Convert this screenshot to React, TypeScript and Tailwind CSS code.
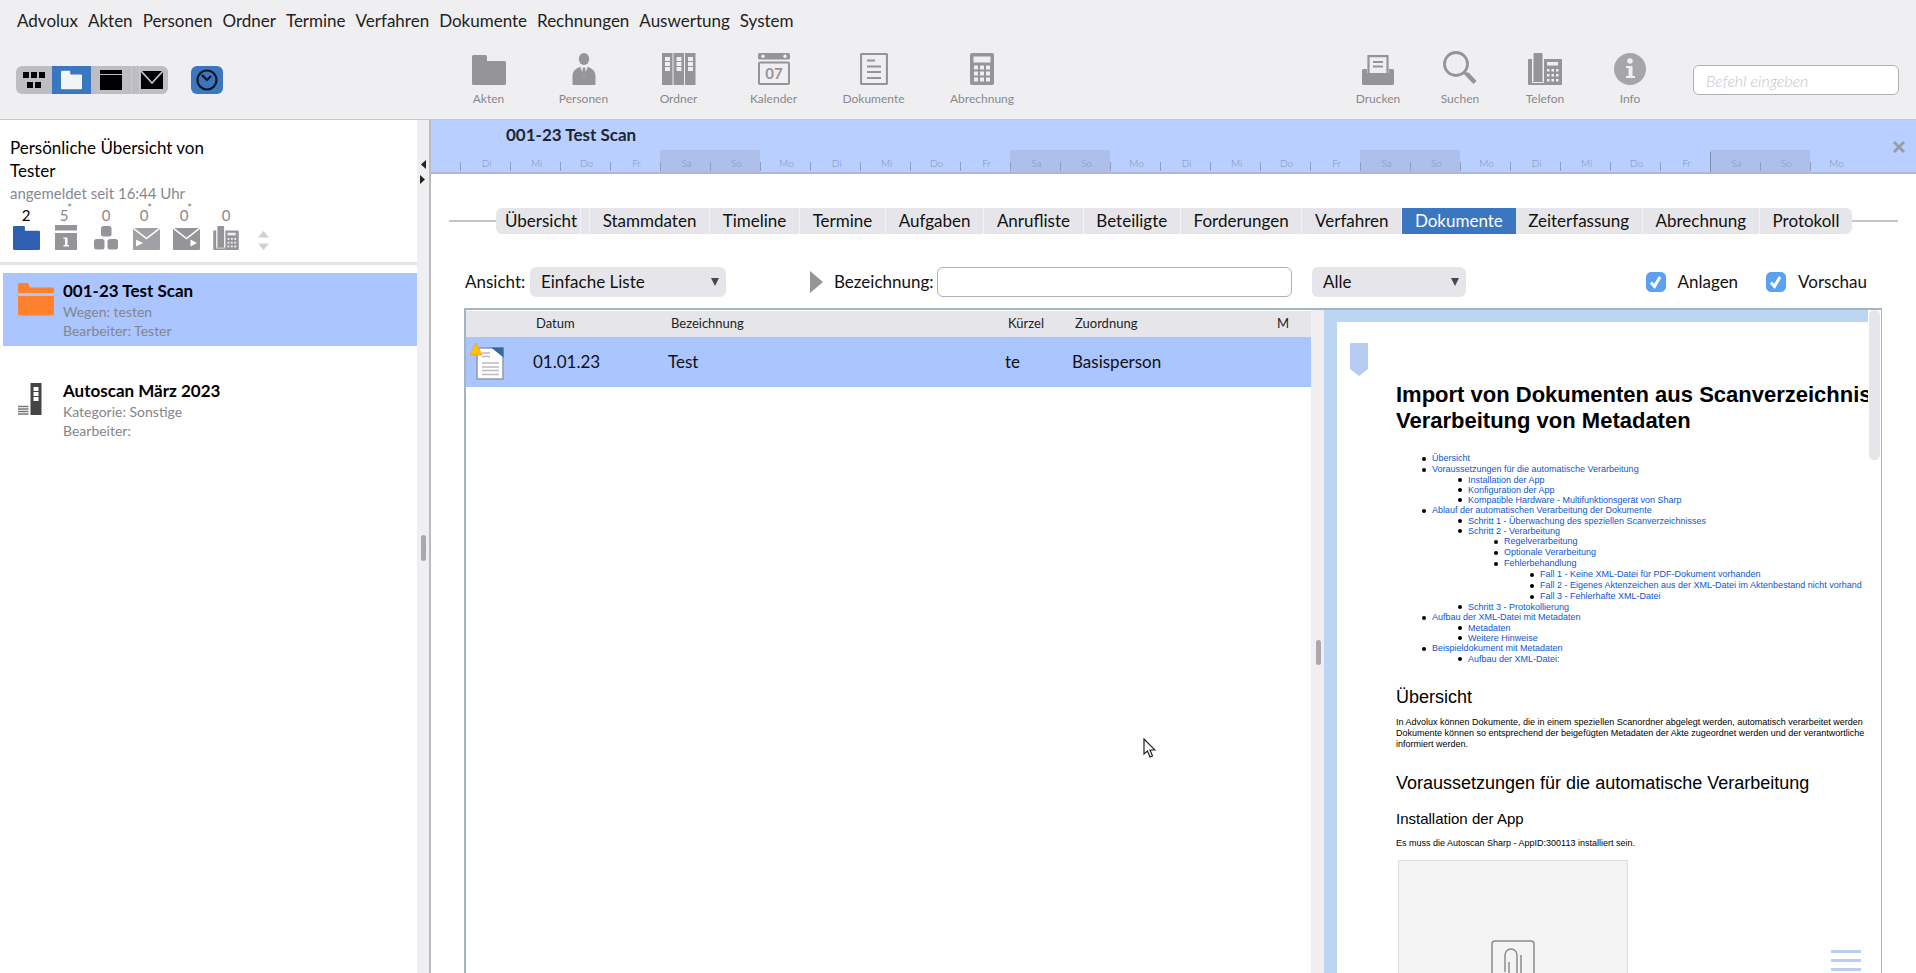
import React, { useState } from 'react';
import clsx from 'clsx';

type IconProps = { className?: string };

const MENU = [
  'Advolux',
  'Akten',
  'Personen',
  'Ordner',
  'Termine',
  'Verfahren',
  'Dokumente',
  'Rechnungen',
  'Auswertung',
  'System',
];

const TABS = [
  'Übersicht',
  'Stammdaten',
  'Timeline',
  'Termine',
  'Aufgaben',
  'Anrufliste',
  'Beteiligte',
  'Forderungen',
  'Verfahren',
  'Dokumente',
  'Zeiterfassung',
  'Abrechnung',
  'Protokoll',
];

const WEEK = ['Di', 'Mi', 'Do', 'Fr', 'Sa', 'So', 'Mo'];
const DAYS = [...WEEK, ...WEEK, ...WEEK, ...WEEK];
const TODAY = 25;

/* ---------- Toolbar icons ---------- */

function FolderIcon({ className }: IconProps) {
  return (
    <svg viewBox="0 0 34 30" className={className} fill="currentColor" aria-hidden="true">
      <path d="M1.500 0h12a1.500 1.500 0 0 1 1.500 1.500V6h17.500a1.500 1.500 0 0 1 1.500 1.500v21a1.500 1.500 0 0 1-1.500 1.500h-31A1.500 1.500 0 0 1 0 28.500v-27A1.500 1.500 0 0 1 1.500 0z" />
    </svg>
  );
}

function PersonIcon({ className }: IconProps) {
  return (
    <svg viewBox="0 0 24 32" className={className} fill="currentColor" aria-hidden="true">
      <ellipse cx="12" cy="6" rx="5.200" ry="6" />
      <path d="M8.500 14 12 25l3.500-11c5 1 8 4.500 8 9.500V31a1 1 0 0 1-1 1h-21a1 1 0 0 1-1-1v-7.500c0-5 3-8.500 8-9.500z" />
      <path d="M11 14.500h2l1 6-2 4-2-4z" />
    </svg>
  );
}

function BindersIcon({ className }: IconProps) {
  return (
    <svg viewBox="0 0 34 32" className={className} aria-hidden="true">
      {[0, 11.5, 23].map((x) => (
        <g key={x}>
          <rect x={x} y="0" width="10.500" height="32" fill="currentColor" />
          <path d={`M${x + 3} 4h5v4h-5zM${x + 3} 9h5v4h-5zM${x + 3} 14h5v4h-5z`} fill="#efeff1" />
        </g>
      ))}
    </svg>
  );
}

function CalendarIcon({ className }: IconProps) {
  return (
    <svg viewBox="0 0 32 32" className={className} aria-hidden="true">
      <rect width="32" height="6.500" rx="1.500" fill="currentColor" />
      <circle cx="5" cy="3.300" r="1.700" fill="#efeff1" />
      <circle cx="27" cy="3.300" r="1.700" fill="#efeff1" />
      <rect x="1" y="9.500" width="30" height="21.500" rx="1" fill="none" stroke="currentColor" strokeWidth="2" />
      <text x="16" y="26" textAnchor="middle" fontSize="15" fontWeight="700" fill="currentColor">
        07
      </text>
    </svg>
  );
}

function DocumentIcon({ className }: IconProps) {
  return (
    <svg viewBox="0 0 28 32" className={className} fill="none" stroke="currentColor" aria-hidden="true">
      <rect x="1" y="1" width="26" height="30" rx="1" strokeWidth="2.200" />
      <path d="M7 7.500h8M7 13.500h14M7 19h14M7 25h14" strokeWidth="2" />
    </svg>
  );
}

function CalculatorIcon({ className }: IconProps) {
  return (
    <svg viewBox="0 0 24 32" className={className} aria-hidden="true">
      <rect width="24" height="32" rx="2" fill="currentColor" />
      <rect x="3.500" y="3.500" width="17" height="6" fill="#efeff1" />
      {[12.5, 18.5, 24.5].map((y) =>
        [4, 10, 16].map((x) => <rect key={`${x}-${y}`} x={x} y={y} width="4" height="4" fill="#efeff1" />),
      )}
    </svg>
  );
}

function PrinterIcon({ className }: IconProps) {
  return (
    <svg viewBox="0 0 32 30" className={className} aria-hidden="true">
      <path d="M1.500 14H5v4h22v-4h3.500a1.500 1.500 0 0 1 1.500 1.500v13a1.500 1.500 0 0 1-1.500 1.500h-29A1.500 1.500 0 0 1 0 28.500v-13A1.500 1.500 0 0 1 1.500 14z" fill="currentColor" />
      <path d="M6.500 18V1.200h19V18" fill="#efeff1" stroke="currentColor" strokeWidth="2.200" />
      <path d="M11 7h10M11 11.500h10" stroke="currentColor" strokeWidth="2" />
    </svg>
  );
}

function SearchIcon({ className }: IconProps) {
  return (
    <svg viewBox="0 0 34 34" className={className} fill="none" stroke="currentColor" aria-hidden="true">
      <circle cx="13" cy="13" r="11.500" strokeWidth="2.800" />
      <path d="m21 21 2.500 2.500" strokeWidth="3" />
      <path d="m23.500 22.500 8.500 9" strokeWidth="4.500" />
    </svg>
  );
}

function PhoneIcon({ className }: IconProps) {
  return (
    <svg viewBox="0 0 34 32" className={className} aria-hidden="true">
      <path d="M1 6h3v22h12V6h17a1 1 0 0 1 1 1v24a1 1 0 0 1-1 1H1a1 1 0 0 1-1-1V7a1 1 0 0 1 1-1z" fill="currentColor" />
      <rect x="5.500" width="9" height="28.500" rx="1" fill="currentColor" />
      <path d="M4.500 6v23.500h11V6" fill="none" stroke="#efeff1" />
      <rect x="19" y="9" width="11" height="3.500" fill="#efeff1" />
      {[16, 21, 26].map((y) =>
        [19, 23.5, 28].map((x) => <rect key={`${x}-${y}`} x={x} y={y} width="2.500" height="2.500" fill="#efeff1" />),
      )}
    </svg>
  );
}

function InfoIcon({ className }: IconProps) {
  return (
    <svg viewBox="0 0 32 32" className={className} aria-hidden="true">
      <circle cx="16" cy="16" r="16" fill="#a5a5aa" />
      <circle cx="16" cy="8" r="2.800" fill="#efeff1" />
      <path d="M12 13h6.500v10H21v2h-9v-2h2.500v-8H12z" fill="#efeff1" />
    </svg>
  );
}

/* ---------- View switch icons ---------- */

function BlocksIcon() {
  return (
    <svg viewBox="0 0 22 18" className="h-[18px] w-[22px]" aria-hidden="true">
      <path d="M0 1h6v6H0zM8 1h6v6H8zM16 1h6v6h-6zM4 11h6v6H4zM12 11h6v6h-6z" />
    </svg>
  );
}

function WindowIcon() {
  return (
    <svg viewBox="0 0 22 20" className="h-5 w-[22px]" aria-hidden="true">
      <path d="M0 0h22v4H0zM0 5h22v15H0z" />
    </svg>
  );
}

function MailIcon() {
  return (
    <svg viewBox="0 0 22 18" className="h-[18px] w-[22px]" aria-hidden="true">
      <path d="M0 0h22v18H0z" />
      <path d="m0 0 11 12L22 0" fill="none" stroke="#bdbdc3" strokeWidth="1.800" />
    </svg>
  );
}

function ClockIcon() {
  return (
    <svg viewBox="0 0 22 22" className="h-[22px] w-[22px]" fill="none" stroke="#0b1520" strokeWidth="2.200" aria-hidden="true">
      <circle cx="11" cy="11" r="9.500" />
      <path d="m6 6 5 5 4-4" />
    </svg>
  );
}

/* ---------- Sidebar icons ---------- */

function AppointmentIcon() {
  return (
    <svg viewBox="0 0 22 25" className="h-[25px] w-[22px]" aria-hidden="true">
      <path d="M0 0h22v5.500H0zM0 8h22v17H0z" fill="#949499" />
      <path d="M8.500 12.500h4V20H14v1.500H8.500V20H10v-6H8.500z" fill="#fff" />
    </svg>
  );
}

function CubesIcon() {
  return (
    <svg viewBox="0 0 24 24" className="h-6 w-6" fill="#949499" aria-hidden="true">
      <rect x="7" y="0" width="10.500" height="10.500" rx="2.500" />
      <rect x="0" y="13" width="10.500" height="10.500" rx="2.500" />
      <rect x="13.500" y="13" width="10.500" height="10.500" rx="2.500" />
    </svg>
  );
}

function EnvelopeIcon({ outgoing = false }: { outgoing?: boolean }) {
  return (
    <svg viewBox="0 0 27 22" className="h-[22px] w-[27px]" aria-hidden="true">
      <rect width="27" height="22" rx="1" fill={outgoing ? '#949499' : '#a0a0a5'} />
      <path d="m0 0 13.500 10.500L27 0" fill="none" stroke="#fff" strokeWidth="1.500" />
      <path d={outgoing ? 'M17.500 11.500v7l6.500-3.500z' : 'M3 11.500v7l7-3.500z'} fill="#fff" />
    </svg>
  );
}

function CaseFolderIcon() {
  return (
    <svg viewBox="0 0 36 33" className="h-[33px] w-9" fill="#ff812d" aria-hidden="true">
      <path d="M1.500 0H10l2 4.500h22.500A1.500 1.500 0 0 1 36 6v4H0V1.500A1.500 1.500 0 0 1 1.500 0z" />
      <path d="M0 13h36v18a1.500 1.500 0 0 1-1.500 1.500h-33A1.500 1.500 0 0 1 0 31z" />
    </svg>
  );
}

function ScanBinderIcon() {
  return (
    <svg viewBox="0 0 24 32" className="h-8 w-6" aria-hidden="true">
      <rect x="12.500" width="11" height="32" rx="0.500" fill="#454545" />
      <path d="M15.500 4h5v4h-5zM15.500 9h5v4h-5zM15.500 14h5v4h-5z" fill="#fff" />
      <path d="M0 23.500h10.500M0 26h10.500M0 28.500h10.500M0 31h10.500" stroke="#777" strokeWidth="1.600" />
    </svg>
  );
}

/* ---------- Header ---------- */

const TOOLS_LEFT = [
  { label: 'Akten', width: 'w-[95px]', icon: <FolderIcon className="h-[30px] w-[34px]" /> },
  { label: 'Personen', width: 'w-[95px]', icon: <PersonIcon className="h-8 w-6" /> },
  { label: 'Ordner', width: 'w-[95px]', icon: <BindersIcon className="h-8 w-[34px]" /> },
  { label: 'Kalender', width: 'w-[95px]', icon: <CalendarIcon className="h-8 w-8" /> },
  { label: 'Dokumente', width: 'w-[105px]', icon: <DocumentIcon className="h-8 w-7" /> },
  { label: 'Abrechnung', width: 'w-[112px]', icon: <CalculatorIcon className="h-8 w-6" /> },
];

const TOOLS_RIGHT = [
  { label: 'Drucken', width: 'w-20', icon: <PrinterIcon className="h-[30px] w-8" /> },
  { label: 'Suchen', width: 'w-[84px]', icon: <SearchIcon className="h-[34px] w-[34px]" /> },
  { label: 'Telefon', width: 'w-[86px]', icon: <PhoneIcon className="h-8 w-[34px]" /> },
  { label: 'Info', width: 'w-[84px]', icon: <InfoIcon className="h-8 w-8" /> },
];

function ToolButton({ label, width, icon }: { label: string; width: string; icon: React.ReactNode }) {
  return (
    <button type="button" className={clsx('flex flex-col items-center gap-1 text-[#949499]', width)}>
      <span className="flex h-[34px] items-end">{icon}</span>
      <span className="text-[12px] leading-5 text-[#88888d]">{label}</span>
    </button>
  );
}

function Header() {
  return (
    <header className="h-[120px] shrink-0 border-b border-[#c6c6c9] bg-[#efeff1]">
      <nav className="flex h-[42px] items-center gap-[10px] px-[17px] text-[17px] text-[#222]">
        {MENU.map((item) => (
          <button key={item} type="button">
            {item}
          </button>
        ))}
      </nav>
      <div className="flex h-[76px] items-center">
        <div className="flex w-[441px] shrink-0 items-center pl-4">
          <div className="flex h-7 overflow-hidden rounded-md bg-[#bdbdc3]">
            <button type="button" aria-label="Übersicht" className="flex w-9 items-center justify-center">
              <BlocksIcon />
            </button>
            <button type="button" aria-label="Akten" className="flex w-[39px] items-center justify-center bg-[#3b76c0] text-[#f4f4f4]">
              <FolderIcon className="h-5 w-[21px]" />
            </button>
            <button type="button" aria-label="Fenster" className="flex w-10 items-center justify-center">
              <WindowIcon />
            </button>
            <span className="w-[9px] border-x border-[#c9c9ce]" />
            <button type="button" aria-label="Post" className="flex w-7 items-center pl-px">
              <MailIcon />
            </button>
          </div>
          <button type="button" aria-label="Uhr" className="ml-[23px] flex h-7 w-8 items-center justify-center rounded-md bg-[#3b76c0]">
            <ClockIcon />
          </button>
        </div>
        <div className="flex">
          {TOOLS_LEFT.map((tool) => (
            <ToolButton key={tool.label} {...tool} />
          ))}
        </div>
        <div className="ml-auto flex">
          {TOOLS_RIGHT.map((tool) => (
            <ToolButton key={tool.label} {...tool} />
          ))}
        </div>
        <input
          type="text"
          aria-label="Befehl"
          placeholder="Befehl eingeben"
          className="mr-[17px] ml-[21px] h-[30px] w-[206px] rounded-md border border-[#b0b0b3] bg-white px-3 text-[16px] font-light italic placeholder:text-[#c4c4c8]"
        />
      </div>
    </header>
  );
}

/* ---------- Sidebar ---------- */

const COUNTERS = [
  { label: 'Akten', count: '2', icon: <FolderIcon className="h-6 w-[27px] text-[#2f5fb0]" />, active: true },
  { label: 'Termine', count: '5', star: true, icon: <AppointmentIcon /> },
  { label: 'Aufgaben', count: '0', icon: <CubesIcon /> },
  { label: 'Posteingang', count: '0', star: true, icon: <EnvelopeIcon /> },
  { label: 'Postausgang', count: '0', star: true, icon: <EnvelopeIcon outgoing /> },
  { label: 'Anrufe', count: '0', icon: <PhoneIcon className="h-6 w-[26px] text-[#949499]" /> },
];

function CaseEntry({ title, lines, icon, selected = false }: { title: string; lines: string[]; icon: React.ReactNode; selected?: boolean }) {
  return (
    <button
      type="button"
      className={clsx('ml-[3px] flex h-[73px] w-full items-start pl-[15px] text-left', selected && 'bg-[#aac5ff]')}
    >
      <span className="flex w-[45px] pt-[10px]">{icon}</span>
      <span className="flex flex-col pt-[7px]">
        <span className="text-[17px] leading-[22px] font-bold text-black">{title}</span>
        {lines.map((line) => (
          <span key={line} className="text-[14px] leading-[19px] text-[#85858a]">
            {line}
          </span>
        ))}
      </span>
    </button>
  );
}

function Sidebar() {
  return (
    <aside className="w-[417px] shrink-0 overflow-hidden bg-white">
      <div className="h-[145px] border-b-[3px] border-[#e4e4e6] px-[10px] pt-4">
        <p className="text-[17px] leading-[23px] text-black">
          Persönliche Übersicht von
          <br />
          Tester
        </p>
        <p className="text-[15px] leading-[23px] text-[#88888c]">angemeldet seit 16:44 Uhr</p>
        <div className="flex items-end pl-[2px]">
          {COUNTERS.map(({ label, count, star, icon, active }) => (
            <button key={label} type="button" aria-label={label} className="flex w-10 flex-col items-start">
              <span
                className={clsx(
                  'relative text-center text-[15px] leading-[21px]',
                  active ? 'text-black' : 'text-[#88888c]',
                  star ? 'w-6' : 'w-7',
                )}
              >
                {count}
                {star && <span className="absolute -top-2 left-[15px] text-[12px]">*</span>}
              </span>
              <span className="flex h-6 w-7 items-end justify-center">{icon}</span>
            </button>
          ))}
          <svg viewBox="0 0 11 19" className="ml-[6px] h-[19px] w-[11px]" fill="#cfcfd4" aria-hidden="true">
            <path d="m5.500 0 5.500 6.500H0zM5.500 19 0 12.500h11z" />
          </svg>
        </div>
      </div>
      <div className="flex flex-col gap-[27px] pt-2">
        <CaseEntry selected title="001-23 Test Scan" lines={['Wegen: testen', 'Bearbeiter: Tester']} icon={<CaseFolderIcon />} />
        <CaseEntry title="Autoscan März 2023" lines={['Kategorie: Sonstige', 'Bearbeiter:']} icon={<ScanBinderIcon />} />
      </div>
    </aside>
  );
}

/* ---------- Main area ---------- */

function CaseBanner() {
  return (
    <div className="relative flex h-[54px] shrink-0 flex-col justify-between border-b-2 border-[#b2b6cf] bg-[#b9cfff]">
      <h1 className="pt-1 pl-[75px] text-[17px] leading-[22px] font-bold text-[#1c2733]">001-23 Test Scan</h1>
      <div className="mr-14 ml-[29px] grid h-[22px] grid-cols-28">
        {DAYS.map((day, i) => (
          <div key={i} className={clsx('flex items-end', (day === 'Sa' || day === 'So') && 'bg-[#aec0ea]')}>
            <span className={clsx('w-px', i === TODAY ? 'h-5 bg-[#7f8cab]' : 'mb-px h-[9px] bg-[#8f9dc2]')} />
            <span className="flex-1 pl-[2px] text-center text-[10px] leading-[17px] font-light text-[#7f90bd]">{day}</span>
          </div>
        ))}
      </div>
      <button type="button" aria-label="Schließen" className="absolute top-[21px] right-[11px] text-[#9a9ca3]">
        <svg viewBox="0 0 12 12" className="h-3 w-3" stroke="currentColor" strokeWidth="2.800" aria-hidden="true">
          <path d="m1 1 10 10M11 1 1 11" />
        </svg>
      </button>
    </div>
  );
}

function TabBar() {
  const [current, setCurrent] = useState('Dokumente');

  return (
    <nav className="mx-[18px] mt-[34px] flex shrink-0 items-center">
      <span className="h-[2px] w-[47px] bg-[#c4c4c6]" />
      <div className="flex h-[26px] flex-1 overflow-hidden rounded-md bg-[#e6e6ea]">
        {TABS.map((tab, i) => (
          <React.Fragment key={tab}>
            {i === 1 && <span className="w-[9px] border-r border-[#f4f4f6]" />}
            <button
              type="button"
              aria-current={tab === current ? 'page' : undefined}
              onClick={() => setCurrent(tab)}
              className={clsx(
                'text-[17px] leading-[26px] last:border-r-0',
                i === 0 ? 'pr-[3px] pl-[9px]' : 'flex-auto',
                tab === current ? 'bg-[#3b76c0] text-white' : 'border-r border-[#f4f4f6] text-[#111]',
              )}
            >
              {tab}
            </button>
          </React.Fragment>
        ))}
      </div>
      <span className="h-[2px] w-[46px] bg-[#c4c4c6]" />
    </nav>
  );
}

function Select({ id, label, value, className }: { id: string; label?: string; value: string; className: string }) {
  return (
    <div className={clsx('relative shrink-0', className)}>
      <select id={id} aria-label={label} className="h-[30px] w-full appearance-none rounded-md bg-[#e6e6ea] pl-[11px] text-[17px] text-[#111]">
        <option>{value}</option>
      </select>
      <svg viewBox="0 0 8 8" className="pointer-events-none absolute top-[11px] right-[7px] h-2 w-2" fill="#48484c" aria-hidden="true">
        <path d="M0 0h8L4 8z" />
      </svg>
    </div>
  );
}

function Checkbox({ label }: { label: string }) {
  const [checked, setChecked] = useState(true);

  return (
    <label className="flex items-center gap-3">
      <span className="relative flex">
        <input
          type="checkbox"
          checked={checked}
          onChange={() => setChecked(!checked)}
          className="h-5 w-5 appearance-none rounded-[5px] border border-[#5ba1ef] bg-white checked:bg-[#5ba1ef]"
        />
        {checked && (
          <svg viewBox="0 0 20 20" className="pointer-events-none absolute inset-0 h-5 w-5" fill="none" stroke="#fff" strokeWidth="3" aria-hidden="true">
            <path d="m5 10.500 3.500 4L14 5" />
          </svg>
        )}
      </span>
      {label}
    </label>
  );
}

function FilterBar() {
  return (
    <div className="mt-[33px] mr-[49px] ml-[34px] flex h-[30px] shrink-0 items-center text-[17px] text-[#111]">
      <label htmlFor="ansicht" className="w-[65px]">
        Ansicht:
      </label>
      <Select id="ansicht" value="Einfache Liste" className="w-[196px]" />
      <button type="button" aria-label="Filter aufklappen" className="ml-[84px]">
        <svg viewBox="0 0 13 22" className="h-[22px] w-[13px]" fill="#949499" aria-hidden="true">
          <path d="M0 0v22l13-11z" />
        </svg>
      </button>
      <label htmlFor="bezeichnung" className="ml-[11px] w-[103px]">
        Bezeichnung:
      </label>
      <input id="bezeichnung" type="text" className="h-[30px] w-[355px] rounded-md border border-[#b0b0b3] bg-white px-2" />
      <Select id="zuordnung" label="Zuordnung" value="Alle" className="ml-5 w-[154px]" />
      <div className="ml-auto flex gap-7">
        <Checkbox label="Anlagen" />
        <Checkbox label="Vorschau" />
      </div>
    </div>
  );
}

function WarningDocumentIcon() {
  return (
    <svg viewBox="0 0 36 38" className="h-[38px] w-9" aria-hidden="true">
      <path d="M7 5h26v31H7z" fill="#fff" stroke="#8f99a8" strokeWidth="1.500" />
      <path d="M21 4.500h12.500v10z" fill="#356b9c" />
      <path d="M12 10h8M12 13.500h8M12 20h17M12 24h17M12 27.500h17M12 31.500h17" stroke="#b9bcc2" strokeWidth="1.400" />
      <path d="m6 0 6 12H0z" fill="#ffc400" stroke="#f0a52c" />
    </svg>
  );
}

function DocumentTable() {
  return (
    <div className="min-w-0 flex-1 pt-px">
      <table className="w-full table-fixed text-left">
        <colgroup>
          <col className="w-[67px]" />
          <col className="w-[135px]" />
          <col />
          <col className="w-[67px]" />
          <col className="w-[202px]" />
          <col className="w-[37px]" />
        </colgroup>
        <thead>
          <tr className="h-[26px] bg-[#e6e6ea] text-[13px] text-[#222]">
            <th aria-label="Typ" />
            <th className="pl-[3px] font-normal">Datum</th>
            <th className="pl-[3px] font-normal">Bezeichnung</th>
            <th className="pl-[3px] font-normal">Kürzel</th>
            <th className="pl-[3px] font-normal">Zuordnung</th>
            <th className="pl-[3px] font-normal">M</th>
          </tr>
        </thead>
        <tbody>
          <tr className="h-[50px] bg-[#aac5ff] text-[17px] text-[#111]">
            <td className="pl-1">
              <WarningDocumentIcon />
            </td>
            <td>01.01.23</td>
            <td>Test</td>
            <td>te</td>
            <td>Basisperson</td>
            <td />
          </tr>
        </tbody>
      </table>
    </div>
  );
}

/* ---------- Document preview ---------- */

type TocItem = { text: string; children?: TocItem[] };

const TOC: TocItem[] = [
  { text: 'Übersicht' },
  {
    text: 'Voraussetzungen für die automatische Verarbeitung',
    children: [
      { text: 'Installation der App' },
      { text: 'Konfiguration der App' },
      { text: 'Kompatible Hardware - Multifunktionsgerät von Sharp' },
    ],
  },
  {
    text: 'Ablauf der automatischen Verarbeitung der Dokumente',
    children: [
      { text: 'Schritt 1 - Überwachung des speziellen Scanverzeichnisses' },
      {
        text: 'Schritt 2 - Verarbeitung',
        children: [
          { text: 'Regelverarbeitung' },
          { text: 'Optionale Verarbeitung' },
          {
            text: 'Fehlerbehandlung',
            children: [
              { text: 'Fall 1 - Keine XML-Datei für PDF-Dokument vorhanden' },
              { text: 'Fall 2 - Eigenes Aktenzeichen aus der XML-Datei im Aktenbestand nicht vorhand' },
              { text: 'Fall 3 - Fehlerhafte XML-Datei' },
            ],
          },
        ],
      },
      { text: 'Schritt 3 - Protokollierung' },
    ],
  },
  {
    text: 'Aufbau der XML-Datei mit Metadaten',
    children: [{ text: 'Metadaten' }, { text: 'Weitere Hinweise' }],
  },
  {
    text: 'Beispieldokument mit Metadaten',
    children: [{ text: 'Aufbau der XML-Datei:' }],
  },
];

function TocList({ items, level = 1 }: { items: TocItem[]; level?: number }) {
  return (
    <ul className="pl-9">
      {items.map((item) => (
        <li key={item.text}>
          <div className={clsx('flex items-center', level === 2 ? 'h-[10px]' : 'h-[11px]')}>
            <span className="-ml-[10px] h-1 w-1 rounded-full bg-black" />
            <a href="#" className="ml-[6px] text-[#0b57d0]">
              {item.text}
            </a>
          </div>
          {item.children && <TocList items={item.children} level={level + 1} />}
        </li>
      ))}
    </ul>
  );
}

function Preview() {
  return (
    <div className="flex w-[557px] shrink-0">
      <div className="relative min-w-0 flex-1 overflow-hidden bg-[#bbd5f2] pt-3 pl-[13px]">
        <article className="h-full overflow-hidden bg-white pt-[60px] pl-[59px] font-['Liberation_Sans',sans-serif] text-[9px] leading-[11px] whitespace-nowrap text-black">
          <h2 className="text-[22px] leading-[26px] font-bold">
            Import von Dokumenten aus Scanverzeichnis
            <br />
            Verarbeitung von Metadaten
          </h2>
          <div className="mt-[19px]">
            <TocList items={TOC} />
          </div>
          <h3 className="mt-[22px] text-[18px] leading-[22px]">Übersicht</h3>
          <p className="mt-[9px]">
            In Advolux können Dokumente, die in einem speziellen Scanordner abgelegt werden, automatisch verarbeitet werden
            <br />
            Dokumente können so entsprechend der beigefügten Metadaten der Akte zugeordnet werden und der verantwortliche
            <br />
            informiert werden.
          </p>
          <h3 className="mt-[22px] text-[18px] leading-[22px]">Voraussetzungen für die automatische Verarbeitung</h3>
          <h4 className="mt-4 text-[15px] leading-[18px]">Installation der App</h4>
          <p className="mt-[10px]">Es muss die Autoscan Sharp - AppID:300113 installiert sein.</p>
          <div className="mt-[11px] ml-[2px] flex h-60 w-[230px] justify-center border border-[#dedede] bg-[#f4f4f4] pt-[79px]">
            <svg viewBox="0 0 44 50" className="h-[50px] w-11" fill="none" stroke="#8c8c8c" strokeWidth="1.500" aria-hidden="true">
              <rect x="1" y="1" width="42" height="48" rx="3" />
              <path d="M30 15v22a7 7 0 0 1-14 0M14 32V15a6 6 0 0 1 12 0v19a4 4 0 0 1-8 0V22" />
            </svg>
          </div>
        </article>
        <svg viewBox="0 0 18 33" className="absolute top-[33px] left-[26px] h-[33px] w-[18px]" fill="#b6cbf1" aria-hidden="true">
          <path d="M1 0h16a1 1 0 0 1 1 1v25l-9 7-9-7V1a1 1 0 0 1 1-1z" />
        </svg>
        <button type="button" aria-label="Menü" className="absolute right-[7px] bottom-[2px] flex w-[30px] flex-col gap-[6px]">
          <span className="h-[3px] bg-[#b9cff2]" />
          <span className="h-[3px] bg-[#b9cff2]" />
          <span className="h-[3px] bg-[#b9cff2]" />
        </button>
      </div>
      <div className="w-[13px] bg-white pl-px">
        <div className="h-[150px] w-[11px] rounded-full bg-[#e6e6ea]" />
      </div>
    </div>
  );
}

function MousePointer() {
  return (
    <svg viewBox="0 0 13 20" className="pointer-events-none absolute top-[738px] left-[1143px] h-5 w-[13px]" aria-hidden="true">
      <path d="M1 1v15l3.500-3 2.500 6 2.500-1-2.500-6H12z" fill="#fff" stroke="#222" strokeWidth="1.200" />
    </svg>
  );
}

export default function App() {
  return (
    <div className="relative flex h-screen flex-col overflow-hidden bg-white font-['Lato',sans-serif]">
      <Header />
      <div className="flex min-h-0 flex-1">
        <Sidebar />
        <div className="relative w-[14px] shrink-0 border-r-2 border-[#bcbcbf] bg-[#efeff1]">
          <svg viewBox="0 0 8 24" className="absolute top-10 left-[2px] h-6 w-2" fill="#222" aria-hidden="true">
            <path d="M7 0v9L2 4.500zM1 15v9l5-4.500z" />
          </svg>
          <span className="absolute top-[415px] left-1 h-[26px] w-[5px] rounded-full bg-[#a9a9ad]" />
        </div>
        <main className="flex min-w-0 flex-1 flex-col">
          <CaseBanner />
          <TabBar />
          <FilterBar />
          <div className="mt-[11px] mr-[34px] ml-[33px] flex min-h-0 flex-1 border-t-2 border-r border-l-2 border-[#a2b5c4]">
            <DocumentTable />
            <div className="relative w-[13px] shrink-0 bg-[#efeff1]">
              <span className="absolute top-[330px] left-[5px] h-[25px] w-[5px] rounded-full bg-[#a9a9ad]" />
            </div>
            <Preview />
          </div>
        </main>
      </div>
      <MousePointer />
    </div>
  );
}
